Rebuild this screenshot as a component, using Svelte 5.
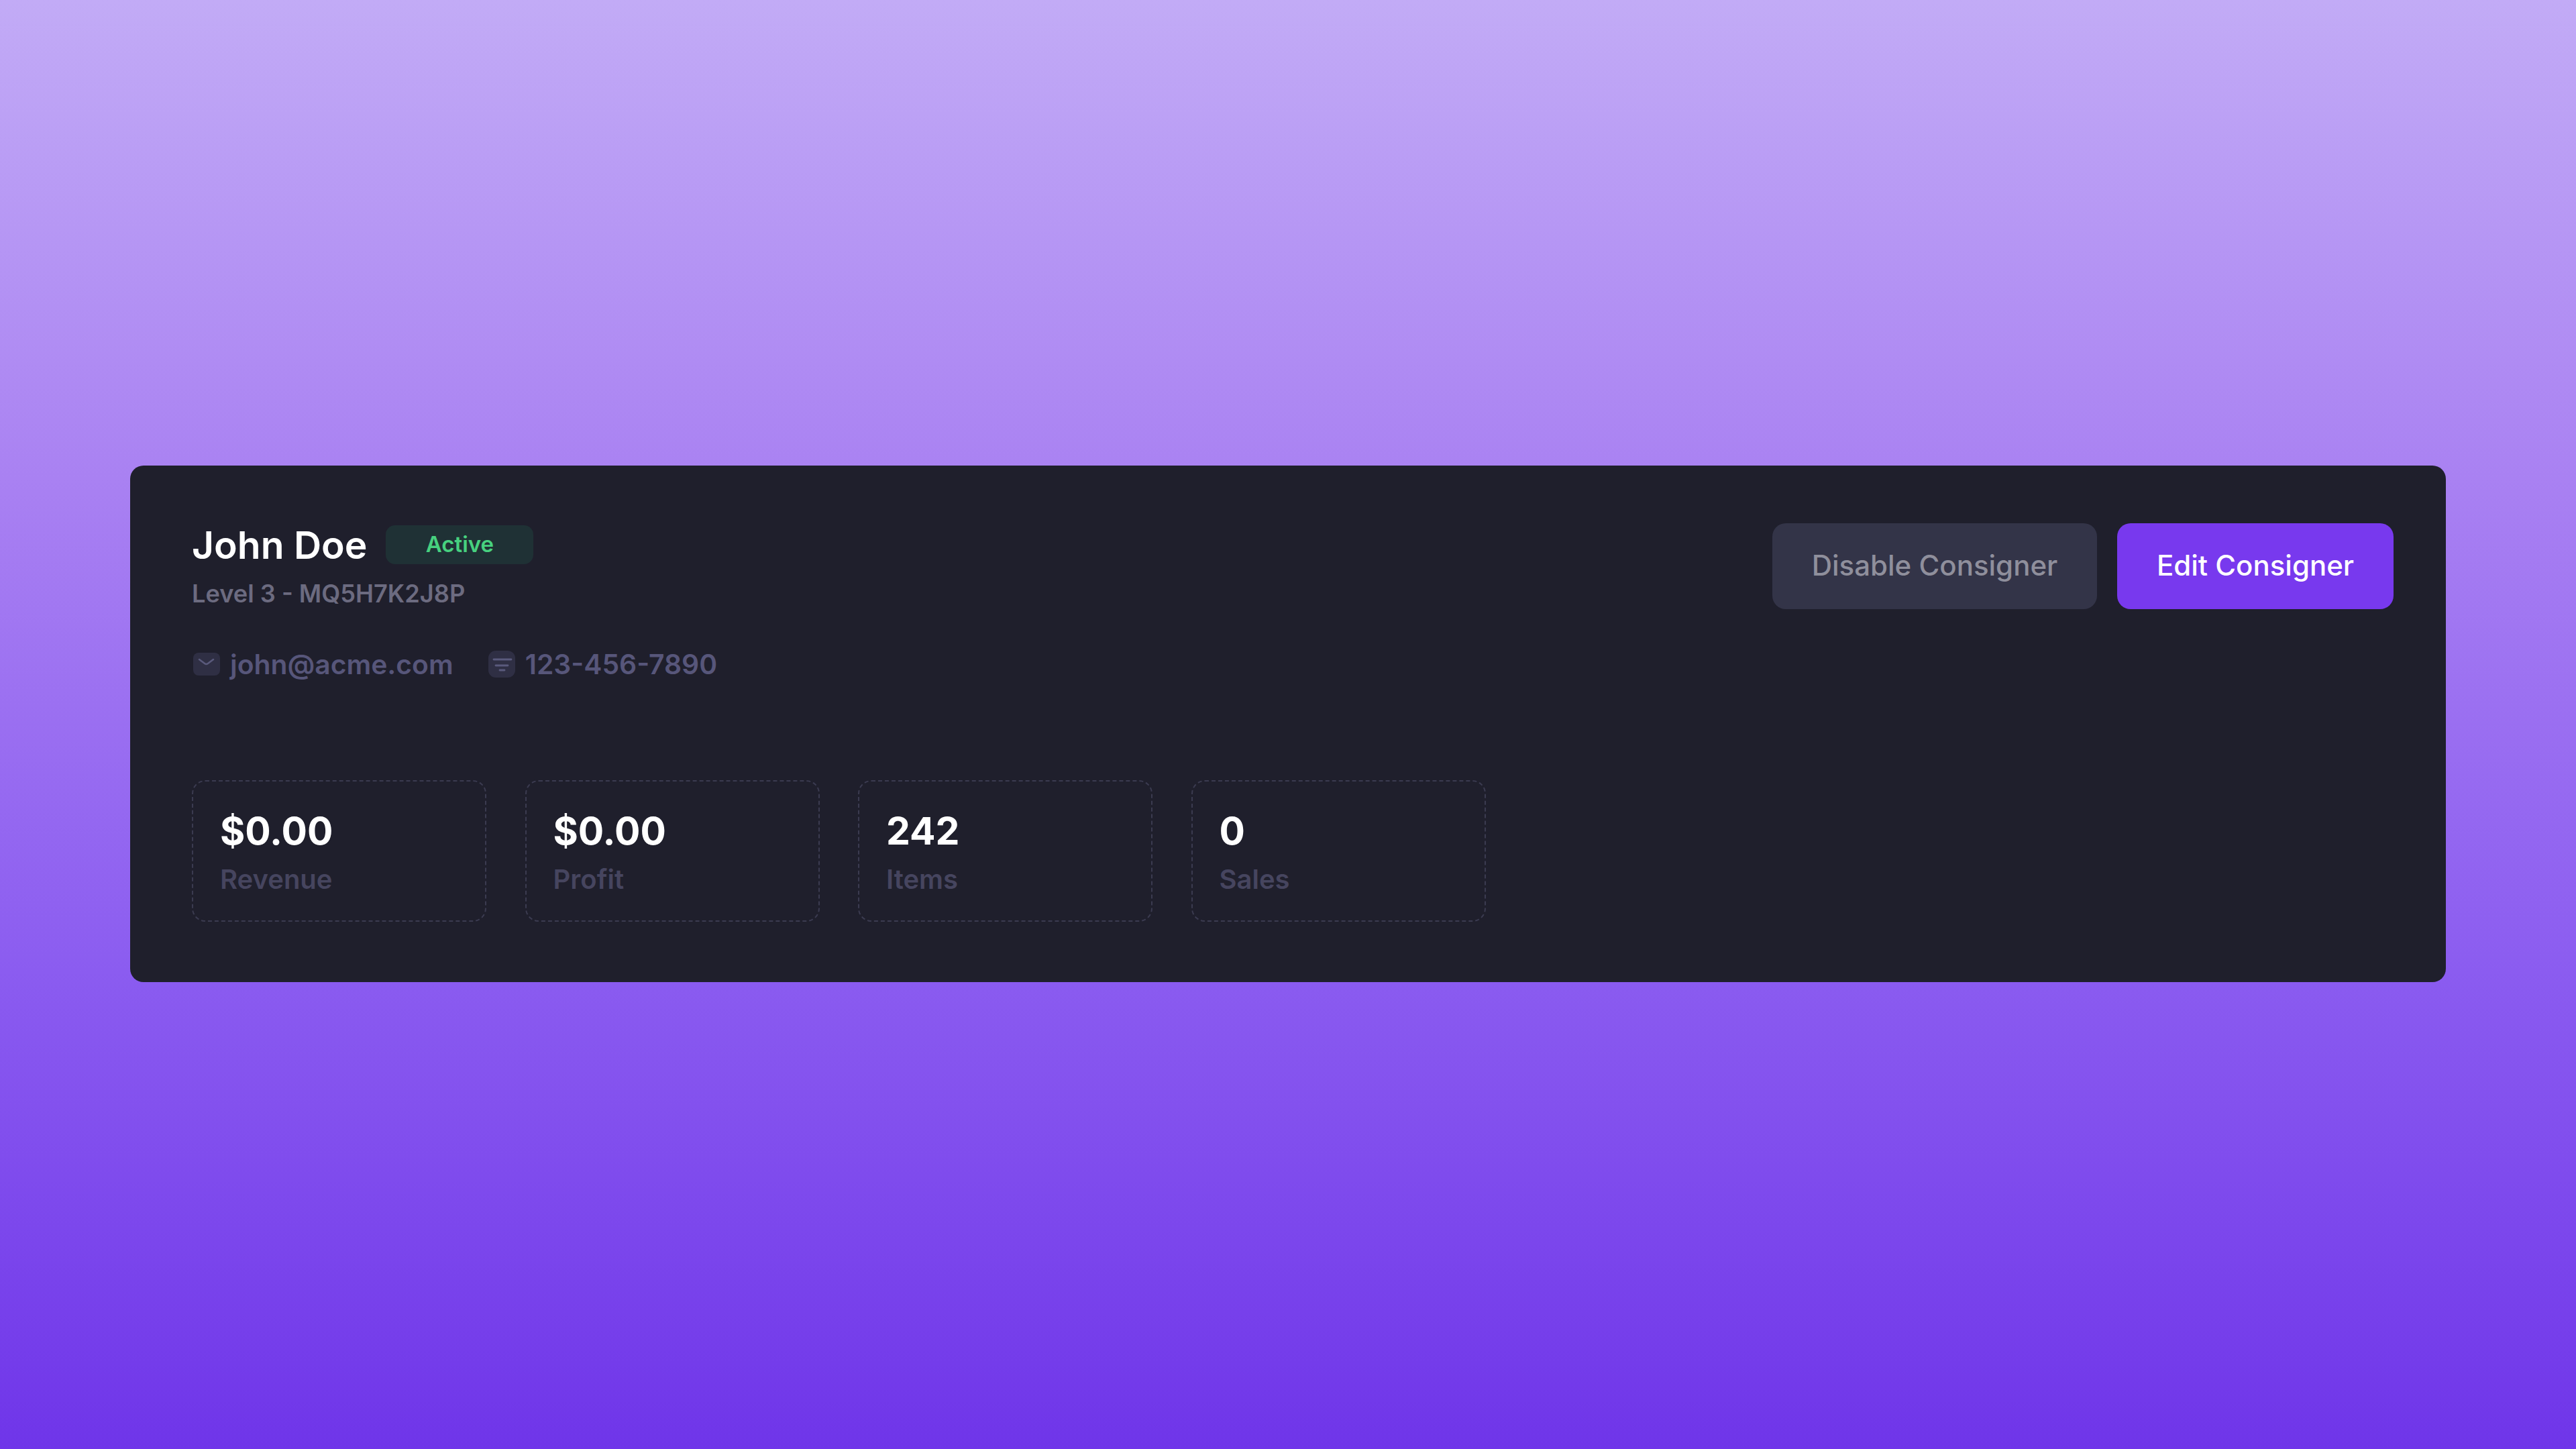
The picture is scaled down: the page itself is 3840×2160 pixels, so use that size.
<script>
  const stats = [
    { value: '$0.00', label: 'Revenue' },
    { value: '$0.00', label: 'Profit' },
    { value: '242', label: 'Items' },
    { value: '0', label: 'Sales' }
  ];
</script>

<main class="page">
  <section class="card">
    <header class="top">
      <div class="identity">
        <div class="name-row">
          <h1>John Doe</h1>
          <span class="badge">Active</span>
        </div>
        <p class="level">Level 3 - MQ5H7K2J8P</p>
        <div class="contacts">
          <span class="contact">
            <svg class="mail" viewBox="0 0 40 34" aria-hidden="true">
              <rect width="40" height="34" rx="8" fill="#2f2f44" />
              <path d="M9 10 L17 16 Q19.500 18 22 16 L30 10" fill="none" stroke="#5a5a7c" stroke-width="2.6" stroke-linecap="round" />
            </svg>
            john@acme.com
          </span>
          <span class="contact">
            <svg class="phone" viewBox="0 0 40 40" aria-hidden="true">
              <rect width="40" height="40" rx="11" fill="#2f2f44" />
              <path d="M8 13H34M11 22H29M17 29H24" fill="none" stroke="#5a5a7c" stroke-width="2.800" stroke-linecap="round" />
            </svg>
            123-456-7890
          </span>
        </div>
      </div>
      <div class="actions">
        <button class="btn secondary">Disable Consigner</button>
        <button class="btn primary">Edit Consigner</button>
      </div>
    </header>
    <div class="stats">
      {#each stats as s}
        <div class="stat">
          <div class="value">{s.value}</div>
          <div class="label">{s.label}</div>
        </div>
      {/each}
    </div>
  </section>
</main>

<style>
  :global(body) {
    margin: 0;
    font-family: Inter, "Liberation Sans", sans-serif;
  }
  .page {
    box-sizing: border-box;
    height: 2160px;
    padding: 0 194px 2px;
    display: flex;
    align-items: center;
    background: linear-gradient(180deg, #c2abf6 0%, #a981f2 33%, #8b5cf0 67%, #6f35e9 100%);
  }
  .card {
    box-sizing: border-box;
    width: 3452px;
    height: 770px;
    padding: 81px 78px 90px 92px;
    background: #1f1f2c;
    border-radius: 20px;
    display: flex;
    flex-direction: column;
    justify-content: space-between;
  }
  .top {
    display: flex;
    justify-content: space-between;
    align-items: flex-start;
  }
  .name-row {
    display: flex;
    align-items: center;
    gap: 28px;
  }
  h1 {
    margin: 0;
    padding-top: 2px;
    font-size: 57px;
    line-height: 72px;
    font-weight: 600;
    color: #fff;
  }
  .badge {
    box-sizing: border-box;
    width: 220px;
    height: 58px;
    padding-bottom: 2px;
    border-radius: 14px;
    background: #1f3135;
    color: #47d17f;
    font-size: 33px;
    font-weight: 600;
    display: flex;
    align-items: center;
    justify-content: center;
  }
  .level {
    margin: 12px 0 0;
    font-size: 36.2px;
    line-height: 48px;
    font-weight: 600;
    color: #6c6b80;
  }
  .contacts {
    display: flex;
    gap: 52px;
    margin-top: 51px;
    padding-left: 2px;
  }
  .contact {
    display: flex;
    align-items: center;
    gap: 15px;
    font-size: 40.8px;
    line-height: 60px;
    font-weight: 600;
    color: #57567a;
  }
  .mail { width: 40px; height: 34px; }
  .phone { width: 40px; height: 40px; }
  .actions {
    display: flex;
    gap: 30px;
    margin-top: 5px;
  }
  .btn {
    height: 128px;
    border: 0;
    border-radius: 20px;
    font-family: inherit;
    font-size: 42px;
    font-weight: 500;
    padding: 0 0 3px;
  }
  .secondary {
    width: 484px;
    background: #333448;
    color: #8f8f9c;
  }
  .primary {
    width: 412px;
    background: #7839ee;
    color: #fff;
  }
  .stats {
    display: flex;
    gap: 57.5px;
  }
  .stat {
    box-sizing: border-box;
    width: 439px;
    height: 211px;
    padding: 36px 40px;
    border: 2px dashed #3b3b50;
    border-radius: 20px;
  }
  .value {
    font-size: 57px;
    line-height: 76px;
    font-weight: 700;
    color: #fff;
  }
  .label {
    margin-top: 4px;
    font-size: 40px;
    line-height: 60px;
    font-weight: 600;
    color: #46455f;
  }
</style>
